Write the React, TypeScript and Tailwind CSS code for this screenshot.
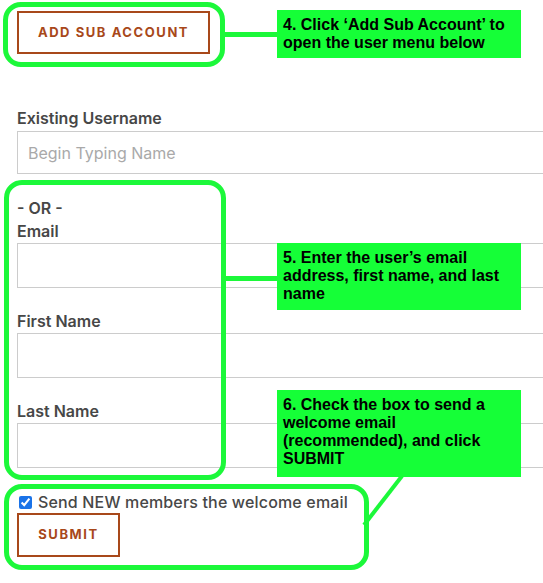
import React from 'react';

const font = { fontFamily: 'Inter, "Noto Sans", sans-serif' };

function Field({ label, mt, placeholder }: { label: string; mt: string; placeholder?: string }) {
  return (
    <div className={mt}>
      <label className="block h-[20px] text-[16px] leading-[20px] font-semibold text-[#474747]">{label}</label>
      <input
        className="mt-[2px] block h-[45px] w-[600px] border border-[#cccccc] bg-white px-[10px] text-[16px] text-[#555] placeholder:text-[#a9a9a9] outline-none"
        placeholder={placeholder}
      />
    </div>
  );
}

function Callout({ className, children }: { className: string; children: React.ReactNode }) {
  return (
    <div
      className={`absolute left-[277px] w-[244px] bg-[#15ff37] px-[6px] pt-[6px] text-[16px] leading-[18px] font-bold text-black ${className}`}
      style={{ fontFamily: '"Liberation Sans", Arial, sans-serif' }}
    >
      {children}
    </div>
  );
}

export default function App() {
  return (
    <div className="relative h-[583px] w-[543px] overflow-hidden bg-white" style={font}>
      <form className="flex flex-col pl-[17px] pt-[11px]">
        <button
          type="button"
          className="h-[43px] w-[193px] border-2 border-[#a8481a] text-[13px] font-bold tracking-[0.12em] text-[#a8481a]"
        >
          ADD SUB ACCOUNT
        </button>

        <div className="mt-[54px]">
          <label className="block h-[20px] text-[16px] leading-[20px] font-semibold text-[#474747]">Existing Username</label>
          <input
            className="mt-[3px] block h-[43px] w-[600px] border border-[#cccccc] bg-white px-[10px] text-[16px] placeholder:text-[#a9a9a9] outline-none"
            placeholder="Begin Typing Name"
          />
        </div>

        <div className="mt-[24px] h-[20px] text-[16px] leading-[20px] font-semibold text-[#474747]">- OR -</div>
        <Field label="Email" mt="mt-[3px]" />
        <Field label="First Name" mt="mt-[23px]" />
        <Field label="Last Name" mt="mt-[23px]" />

        <label className="mt-[24px] flex h-[20px] items-center gap-[6px] text-[16px] font-medium tracking-[0.01em] text-[#474747]">
          <input type="checkbox" defaultChecked className="ml-[2px] h-[13px] w-[13px] accent-[#1a73e8]" />
          Send NEW members the welcome email
        </label>

        <button
          type="button"
          className="mt-[1px] h-[44px] w-[103px] border-2 border-[#a8481a] text-[13px] font-bold tracking-[0.12em] text-[#a8481a]"
        >
          SUBMIT
        </button>
      </form>

      {/* annotation rings */}
      <div className="pointer-events-none absolute left-[3px] top-[2px] h-[65px] w-[222px] rounded-[18px] border-[5px] border-[#1cf83a]" />
      <div className="pointer-events-none absolute left-[4px] top-[180px] h-[300px] w-[222px] rounded-[18px] border-[5px] border-[#1cf83a]" />
      <div className="pointer-events-none absolute left-[4px] top-[484px] h-[86px] w-[365px] rounded-[18px] border-[5px] border-[#1cf83a]" />

      {/* connectors */}
      <div className="absolute left-[224px] top-[32px] h-[5px] w-[54px] bg-[#1cf83a]" />
      <div className="absolute left-[225px] top-[276px] h-[5px] w-[53px] bg-[#1cf83a]" />
      <svg className="absolute left-0 top-0" width="543" height="583">
        <line x1="402" y1="476" x2="364" y2="525" stroke="#1cf83a" strokeWidth="4" />
      </svg>

      <Callout className="top-[10px] h-[48px]">
        4. Click ‘Add Sub Account’ to<br />open the user menu below
      </Callout>
      <Callout className="top-[243px] h-[67px]">
        5. Enter the user’s email<br />address, first name, and last<br />name
      </Callout>
      <Callout className="top-[390px] h-[87px]">
        6. Check the box to send a<br />welcome email<br />(recommended), and click<br />SUBMIT
      </Callout>
    </div>
  );
}
